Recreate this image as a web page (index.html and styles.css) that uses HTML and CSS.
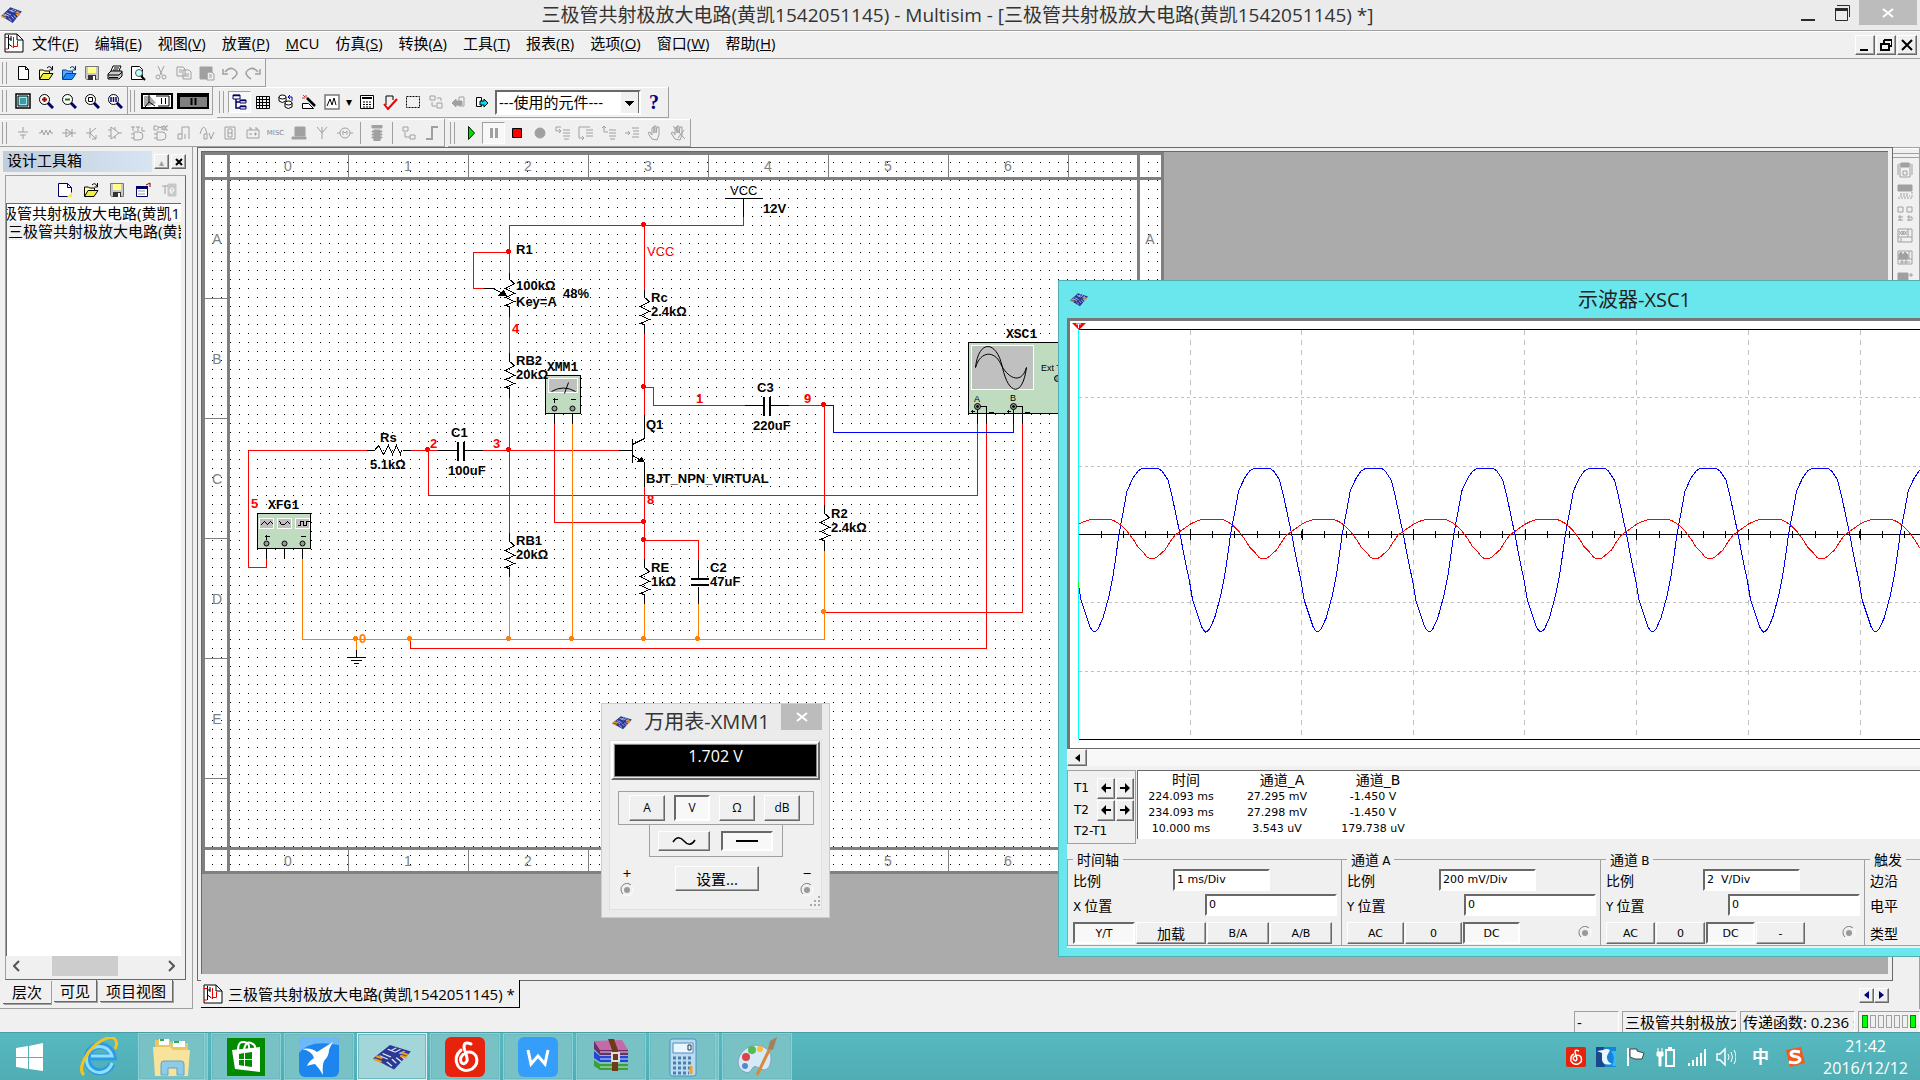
FILE: index.html
```html
<!DOCTYPE html>
<html lang="zh-CN">
<head>
<meta charset="utf-8">
<title>三极管共射极放大电路(黄凯1542051145) - Multisim</title>
<link rel="stylesheet" href="styles.css">
</head>
<body>
<svg class="defs" aria-hidden="true">
  <symbol id="chip" viewBox="0 0 40 40" preserveAspectRatio="none">
    <path d="M2 22 18 3 38 12 22 38Z" fill="#2a3a94"/>
    <path d="M8 18l8 5M11 15l8 5M16 9l7 4M24 7l-5 4M28 9l-5 4M32 12l-5 3M20 23l4 6M15 27l5 6M24 21l5 6M28 18l4 5" stroke="#dfe4f8" stroke-width="1.500"/>
    <path d="M3 23l7 4M5 19l6 3M29 14l6 3M28 18l6 3" stroke="#f39a1d" stroke-width="3"/>
  </symbol>
  <symbol id="doc" viewBox="0 0 20 20">
    <path d="M1 1h12l6 6v12H1Z" fill="#fff" stroke="#000"/><path d="M13 1v6h6" fill="none" stroke="#000"/>
    <path d="M1 4.500h3M1 16h3M9.500 4v11M9.500 13.500h4V8" fill="none" stroke="#e00"/><path d="M4.500 2v14M4.500 6h3M4.500 11l4 3M7 3v5" fill="none" stroke="#000"/>
  </symbol>
  <symbol id="newf" viewBox="0 0 16 16"><path d="M3.500 1.500h7l3 3v10h-10Z" fill="#fff" stroke="#000"/><path d="M10.500 1.500v3h3" fill="none" stroke="#000"/></symbol>
  <symbol id="open" viewBox="0 0 16 16"><path d="M1.500 14v-9h4l1 1h5v3" fill="#ff9" stroke="#000"/><path d="M1.500 14.500 5 8.500h10l-4 6Z" fill="#ee4" stroke="#000"/><path d="M9 3q3-3 5 1M14.500 1v4h-3" fill="none" stroke="#000"/></symbol>
  <symbol id="openb" viewBox="0 0 16 16"><path d="M1.500 14v-9h4l1 1h5v3" fill="#6af" stroke="#048"/><path d="M1.500 14.500 5 8.500h10l-4 6Z" fill="#28f" stroke="#048"/><path d="M9 3q3-3 5 1M14.500 1v4h-3" fill="none" stroke="#026"/></symbol>
  <symbol id="save" viewBox="0 0 16 16"><path d="M1.500 1.500h13v13h-12l-1-1Z" fill="#c8c8c8" stroke="#777"/><path d="M4 2h8v6H4Z" fill="#ff8"/><path d="M4 10h8v5H4Z" fill="#333"/><path d="M9 11h2v4H9Z" fill="#fff"/></symbol>
  <symbol id="zoom" viewBox="0 0 16 16"><circle cx="6.500" cy="6.500" r="5" fill="#fff" stroke="#000"/><path d="M10 10l5 5" stroke="#006" stroke-width="3"/></symbol>
  <symbol id="jack" viewBox="0 0 14 14"><circle cx="7" cy="7" r="6" fill="#f0f0f0" stroke="#fff"/><path d="M3 11A6 6 0 0 1 11 2" fill="none" stroke="#777"/><circle cx="7" cy="7" r="3" fill="#999"/></symbol>
</svg>

<header class="titlebar">
  <svg class="app-icon"><use href="#chip"/></svg>
  <h1>三极管共射极放大电路(黄凯1542051145) - Multisim - [三极管共射极放大电路(黄凯1542051145) *]</h1>
  <div class="winbtns">
    <button aria-label="最小化"><svg width="16" height="18"><path d="M1 16h14" stroke="#2b2b2b" stroke-width="2"/></svg></button>
    <button aria-label="还原"><svg width="16" height="18"><path d="M1.500 4.500h12v12h-12Z" fill="none" stroke="#2b2b2b"/><path d="M1 5.500h13" stroke="#2b2b2b" stroke-width="3"/><path d="M3 1.500h12.500V13" fill="none" stroke="#2b2b2b"/></svg></button>
    <button class="close" aria-label="关闭"><svg width="12" height="10"><path d="M1 1l10 8M11 1L1 9" stroke="#fff" stroke-width="2"/></svg></button>
  </div>
</header>

<nav class="menubar">
  <svg class="doc-icon"><use href="#doc"/></svg>
  <a href="#">文件(<u>F</u>)</a><a href="#">编辑(<u>E</u>)</a><a href="#">视图(<u>V</u>)</a><a href="#">放置(<u>P</u>)</a><a href="#"><u>M</u>CU</a><a href="#">仿真(<u>S</u>)</a><a href="#">转换(<u>A</u>)</a><a href="#">工具(<u>T</u>)</a><a href="#">报表(<u>R</u>)</a><a href="#">选项(<u>O</u>)</a><a href="#">窗口(<u>W</u>)</a><a href="#">帮助(<u>H</u>)</a>
  <div class="docbtns">
    <button class="raised" aria-label="最小化"><svg width="12" height="12"><path d="M1 11h8" stroke="#000" stroke-width="2"/></svg></button>
    <button class="raised" aria-label="还原"><svg width="12" height="12"><path d="M4 1h8v6H9M1 5h8v6H1ZM4 1v3" fill="none" stroke="#000" stroke-width="2"/></svg></button>
    <button class="raised" aria-label="关闭"><svg width="12" height="12"><path d="M1 1l10 10M11 1L1 11" stroke="#000" stroke-width="2"/></svg></button>
  </div>
</nav>

<div class="toolbars">
  <div class="tbrow">
    <div class="tb">
      <button aria-label="新建"><svg><use href="#newf"/></svg></button>
      <button aria-label="打开"><svg><use href="#open"/></svg></button>
      <button aria-label="打开示例"><svg><use href="#openb"/></svg></button>
      <button aria-label="保存"><svg><use href="#save"/></svg></button>
      <button aria-label="打印"><svg viewBox="0 0 16 16"><path d="M4 6 6 1h8l-2 5" fill="#fff" stroke="#000"/><path d="M1 9l3-3h11v5l-3 3H1Z" fill="#ccc" stroke="#000"/><path d="M1 10h11l3-3M2 12.500h9M7 3h5M6 5h5" fill="none" stroke="#000"/></svg></button>
      <button aria-label="打印预览"><svg viewBox="0 0 16 16"><path d="M1.500 1.500h8l3 3v10h-11Z" fill="#fff" stroke="#000"/><circle cx="9" cy="8" r="3.500" fill="#bff" stroke="#555"/><path d="M11 11l4 4" stroke="#000" stroke-width="2"/></svg></button>
      <button class="off" aria-label="剪切" disabled><svg viewBox="0 0 16 16"><path d="M5 1l4 9M11 1L7 10"/><circle cx="5" cy="12" r="2"/><circle cx="11" cy="12" r="2"/></svg></button>
      <button class="off" aria-label="复制" disabled><svg viewBox="0 0 16 16"><path d="M1 2h6l2 2v7H1ZM7 5h6l2 2v7H7ZM3 5h3M3 7h3M9 9h4M9 11h4"/></svg></button>
      <button class="off" aria-label="粘贴" disabled><svg viewBox="0 0 16 16"><path class="f" d="M1 2h12v5H8v7H1Z"/><path d="M8 7h5l2 2v6H8ZM10 10h3M10 12h3"/></svg></button>
      <button class="off" aria-label="撤销" disabled><svg viewBox="0 0 16 16"><path d="M3 7Q8 1 13 5t-3 9M1 4v5h5" stroke-width="1.500"/></svg></button>
      <button class="off" aria-label="重做" disabled><svg viewBox="0 0 16 16"><path d="M13 7Q8 1 3 5t3 9M15 4v5h-5" stroke-width="1.500"/></svg></button>
    </div>
  </div>
  <div class="tbrow tall">
    <div class="tb">
      <button aria-label="全屏"><svg viewBox="0 0 16 16"><path d="M1 1h14v14H1Z" fill="#fff" stroke="#000" stroke-width="1.500"/><path d="M3 3h10v10H3Z" fill="#8ee" stroke="#000"/><path d="M5 6h6M5 8h6M5 10h6" stroke="#045"/></svg></button>
      <button aria-label="放大"><svg viewBox="0 0 16 16"><use href="#zoom"/><path d="M4 6.500h5M6.500 4v5" stroke="#a00" stroke-width="2"/></svg></button>
      <button aria-label="缩小"><svg viewBox="0 0 16 16"><use href="#zoom"/><path d="M4 6.500h5" stroke="#080" stroke-width="2"/></svg></button>
      <button aria-label="区域缩放"><svg viewBox="0 0 16 16"><use href="#zoom"/><path d="M4.500 4.500h4v4h-4Z" fill="none" stroke="#000"/></svg></button>
      <button aria-label="适合页面"><svg viewBox="0 0 16 16"><use href="#zoom"/><path d="M4 4v5M6.500 4v5M9 4v5" stroke="#008" stroke-width="1.500"/></svg></button>
    </div>
    <div class="tb">
      <button class="switch" aria-label="仿真开关"><svg viewBox="0 0 32 16"><path d="M1 1h30v14H1Z" fill="#fff" stroke="#000" stroke-width="2"/><path d="M3 3h6l6 7-7 3H3Z" fill="#aaa"/><path d="M8 0v9l-4 5M8 9l6 4M15 3h13v10H17M20.500 5v6M24.500 5v6" fill="none" stroke="#000"/></svg></button>
      <button class="switch" aria-label="暂停开关"><svg viewBox="0 0 32 16"><path d="M1 1h30v14H1Z" fill="#808080" stroke="#000" stroke-width="2"/><path d="M2 14V3h28" fill="none" stroke="#000" stroke-width="2"/><path d="M14.500 5v7M18.500 5v7" stroke="#000" stroke-width="2"/></svg></button>
    </div>
    <div class="tb big">
      <button class="down" aria-label="设计工具箱"><svg viewBox="0 0 16 16"><path d="M1 1h7v4H1ZM8 6h6v3H8ZM8 12h6v3H8Z" fill="#fff" stroke="#006"/><path d="M1 1.500h7M8 6.500h6M8 12.500h6M4 5v9h4M4 8h4" fill="none" stroke="#006" stroke-width="1.500"/></svg></button>
      <button aria-label="电子表格"><svg viewBox="0 0 16 16"><path d="M1.500 2.500h13v12h-13ZM1.500 5.500h13M1.500 8.500h13M1.500 11.500h13M4.500 2.500v12M7.500 2.500v12M11.500 2.500v12" fill="none" stroke="#000"/></svg></button>
      <button aria-label="数据库管理"><svg viewBox="0 0 16 16"><path d="M1 3v4q3 3 7 0V3M7 9v4q3 3 7 0V9" fill="#fff" stroke="#000"/><ellipse cx="4.500" cy="3" rx="3.500" ry="2" fill="#fff" stroke="#000"/><ellipse cx="10.500" cy="9" rx="3.500" ry="2" fill="#fff" stroke="#000"/><path d="M14 7V3h-4M12 1l-2 2 2 2" fill="none" stroke="#00a"/></svg></button>
      <button aria-label="元件向导"><svg viewBox="0 0 16 16"><path d="M6 4l8 8" stroke="#000" stroke-width="2.500"/><path d="M1.500 14.500v-5h6l5 5Z" fill="#fff" stroke="#000"/><path d="M1 4h3M5 1v3M2 1l2 2" stroke="#c33"/></svg></button>
      <button aria-label="记录仪"><svg viewBox="0 0 16 16"><path d="M1 1h14v14H1Z" fill="#fff" stroke="#777" stroke-width="1.500"/><path d="M3 12l3-7 2 6 2-7 2 7" fill="none" stroke="#000"/></svg></button>
      <button class="drop" aria-label="更多">▾</button>
      <button aria-label="后处理"><svg viewBox="0 0 16 16"><path d="M1.500 1.500h13v13h-13Z" fill="#fff" stroke="#000"/><path d="M3 4h10" stroke="#000" stroke-width="2"/><path d="M4 8h8M4 10.500h8M4 13h8" stroke="#000" stroke-dasharray="2 1"/></svg></button>
      <button aria-label="规则检查"><svg viewBox="0 0 16 16"><path d="M4 11V2h7v4" fill="none" stroke="#000"/><path d="M2 10l4 5 9-10" fill="none" stroke="#e00" stroke-width="2"/></svg></button>
      <button aria-label="捕捉区域"><svg viewBox="0 0 16 16"><path d="M1.500 2.500h13v11h-13Z" fill="none" stroke="#000" stroke-dasharray="2 1"/></svg></button>
      <button class="off" aria-label="父层" disabled><svg viewBox="0 0 16 16"><path d="M2 2h5v4H2ZM9 9h5v5H9ZM4 8v4h4M9 4h4v3"/></svg></button>
      <button class="off" aria-label="后退" disabled><svg viewBox="0 0 16 16"><path d="M8 3h5v9H8Z"/><path class="f" d="M1 9l4-4v2h6v4H5v2Z"/></svg></button>
      <button aria-label="前进"><svg viewBox="0 0 16 16"><path d="M2.500 3.500h5v9h-5Z" fill="#fff" stroke="#000"/><path d="M6 7h4V5l4 4-4 4v-2H6Z" fill="#0de" stroke="#000"/></svg></button>
      <select aria-label="使用的元件"><option>---使用的元件---</option></select>
      <button class="help" aria-label="帮助">?</button>
    </div>
  </div>
  <div class="tbrow">
    <div class="tb wide">
      <button class="off" aria-label="电源" disabled><svg viewBox="0 0 16 16"><path d="M8 2v5M3 7h10M5 10h6M8 10v4"/></svg></button>
      <button class="off" aria-label="基础" disabled><svg viewBox="0 0 16 16"><path d="M1 8h2l1-3 2 5 2-5 2 5 2-5 1 3h2"/></svg></button>
      <button class="off" aria-label="二极管" disabled><svg viewBox="0 0 16 16"><path d="M1 8h14M5 4v8l6-4ZM11 4v8"/></svg></button>
      <button class="off" aria-label="晶体管" disabled><svg viewBox="0 0 16 16"><path d="M2 8h4M6 3v10M6 8l6-5M6 8l6 6M12 10v4H8"/></svg></button>
      <button class="off" aria-label="模拟" disabled><svg viewBox="0 0 16 16"><path d="M4 2v12l8-6ZM1 5h3M1 11h3M12 8h3M8 2v3M8 11v3"/></svg></button>
      <button class="off" aria-label="TTL" disabled><svg viewBox="0 0 16 16"><path d="M1 2h4M3 2v4M6 2h4M8 2v4M12 2v4h3M4 7h5q4 0 4 4t-4 4H4ZM1 9h3M1 13h3"/></svg></button>
      <button class="off" aria-label="CMOS" disabled><svg viewBox="0 0 16 16"><path d="M4 1H1v4h3M5 5V1l2 2 2-2v4M10 1h2v4h-2ZM15 1h-2v4h2M4 7h5q4 0 4 4t-4 4H4ZM1 9h3M1 13h3"/></svg></button>
      <button class="off" aria-label="混合数字" disabled><svg viewBox="0 0 16 16"><path d="M6 9V2h7v12M2 9h4v5H2ZM9 9v5"/></svg></button>
      <button class="off" aria-label="混合" disabled><svg viewBox="0 0 16 16"><path d="M1 9q4-14 7 0M5 9h3v5H5ZM10 8l2 6 3-7"/></svg></button>
      <button class="off" aria-label="指示器" disabled><svg viewBox="0 0 16 16"><path d="M3 2h10v12H3ZM6 4h4v8H6ZM6 8h4"/></svg></button>
      <button class="off" aria-label="功率" disabled><svg viewBox="0 0 16 16"><path d="M2 5h12v8H2ZM4 3h2v2M10 3h2v2M4 9h3M9 9h3M10.500 7.500v3"/></svg></button>
      <button class="off txt" aria-label="杂项" disabled>MISC</button>
      <button class="off" aria-label="外设" disabled><svg viewBox="0 0 16 16"><path class="f" d="M4 2h10v9H4ZM1 12h14v2H1Z"/></svg></button>
      <button class="off" aria-label="射频" disabled><svg viewBox="0 0 16 16"><path d="M8 14V8L3 2M8 8l5-6M8 2v6"/></svg></button>
      <button class="off" aria-label="机电" disabled><svg viewBox="0 0 16 16"><circle cx="8" cy="8" r="5"/><path d="M0 8h3M13 8h3M6 10V6l2 2 2-2v4"/></svg></button>
      <span class="sep"></span>
      <button class="off" aria-label="微控制器" disabled><svg viewBox="0 0 16 16"><path class="f" d="M3 0h10v3H3ZM5 5h6v11H5ZM3 6h10v1H3ZM3 9h10v1H3ZM3 12h10v1H3Z"/></svg></button>
      <span class="sep"></span>
      <button class="off" aria-label="层次块" disabled><svg viewBox="0 0 16 16"><path d="M2 2h5v4H2ZM9 10h5v4H9ZM4 7v5h5"/></svg></button>
      <button class="off" aria-label="总线" disabled><svg viewBox="0 0 16 16"><path d="M2 14h6V2h6" stroke-width="2"/></svg></button>
    </div>
    <div class="tb">
      <button aria-label="运行"><svg viewBox="0 0 16 16"><path d="M5.500 1.500v13l6-6.500Z" fill="#0d0" stroke="#020"/></svg></button>
      <button class="down" aria-label="暂停"><svg viewBox="0 0 16 16"><path class="f" d="M4 3h3v10H4ZM9 3h3v10H9Z" fill="#a0a0a0"/></svg></button>
      <button aria-label="停止"><svg viewBox="0 0 16 16"><path d="M3.500 3.500h9v9h-9Z" fill="#f00" stroke="#000"/></svg></button>
      <button class="off" aria-label="断点" disabled><svg viewBox="0 0 16 16"><circle class="f" cx="8" cy="8" r="5"/></svg></button>
      <button class="off" aria-label="步入" disabled><svg viewBox="0 0 16 16"><path d="M6 2H1v4h4M4 4l2 2-2 2M8 5h7M8 8h7M8 11h7M9 14h5"/></svg></button>
      <button class="off" aria-label="步过" disabled><svg viewBox="0 0 16 16"><path d="M12 2H1v11h4M4 11l2 2-2 2M8 5h7M8 8h7M8 11h7"/></svg></button>
      <button class="off" aria-label="步出" disabled><svg viewBox="0 0 16 16"><path d="M3 1v6h4M1 3l2-2 2 2M8 5h7M8 8h7M8 11h7M9 14h5"/></svg></button>
      <button class="off" aria-label="运行到光标" disabled><svg viewBox="0 0 16 16"><path d="M1 8h5M4 6l2 2-2 2M8 3h7M9 6h6M9 9h6M8 12h7"/></svg></button>
      <button class="off" aria-label="切换断点" disabled><svg viewBox="0 0 16 16"><path d="M5 14 1 8l2-1 2 3V3l2-1v6V1h2v7l1-6h2v8l-2 5Z"/></svg></button>
      <button class="off" aria-label="清除断点" disabled><svg viewBox="0 0 16 16"><path d="M5 14 1 8l2-1 2 3V3l2-1v6V1h2v7l1-6h2v8l-2 5ZM3 1l12 13M8 13l6-8"/></svg></button>
    </div>
  </div>
</div>

<main class="main">
  <aside class="toolbox">
    <div class="tbx-head"><h2>设计工具箱</h2><button class="raised grey" aria-label="收起">▴</button><button class="raised" aria-label="关闭"><svg width="8" height="8"><path d="M1 1l6 6M7 1L1 7" stroke="#000" stroke-width="2"/></svg></button></div>
    <div class="tbx-body">
      <div class="tbx-tools">
        <button aria-label="新建"><svg viewBox="0 0 16 16"><path d="M1.500 1.500h9l4 4v9h-13Z" fill="#fff" stroke="#006"/><path d="M10 15l5-5v5Z" fill="#ee4"/><path d="M10.500 1.500v4h4" fill="none" stroke="#006"/></svg></button>
        <button aria-label="打开"><svg><use href="#open"/></svg></button>
        <button aria-label="保存"><svg><use href="#save"/></svg></button>
        <button aria-label="关闭"><svg viewBox="0 0 16 16"><path d="M1.500 4.500h11v10h-11Z" fill="#fff" stroke="#006"/><path d="M1 5.500h12" stroke="#006" stroke-width="3"/><path d="M3 9h7M3 12h7" stroke="#999"/><path d="M11 3l4-2v4" fill="none" stroke="#800"/></svg></button>
        <button class="off" aria-label="重命名" disabled><svg viewBox="0 0 16 16"><path class="f pale" d="M7 2h8v12H7Z"/><path d="M1 4h6M4 4v8"/><path class="inv" d="M9 9h4q0-3-2-3t-2 3 3 2"/></svg></button>
      </div>
      <ul class="tree"><li class="root">三极管共射极放大电路(黄凯1542051145)</li><li class="leaf">三极管共射极放大电路(黄凯1542051145)</li></ul>
      <div class="hscroll"><button aria-label="向左"><svg width="7" height="12"><path d="M6 1L1 6l5 5" fill="none" stroke="#555" stroke-width="2"/></svg></button><i></i><button aria-label="向右"><svg width="7" height="12"><path d="M1 1l5 5-5 5" fill="none" stroke="#555" stroke-width="2"/></svg></button></div>
    </div>
    <div class="tbx-tabs"><button class="on">层次</button><button>可见</button><button>项目视图</button></div>
  </aside>

  <section class="mdi">
    <div class="frame"><div class="workspace">
      <svg class="sheet" viewBox="202 152 962 722" width="962" height="722">
        <defs><pattern id="dots" x="5" y="0" width="9" height="9" patternUnits="userSpaceOnUse"><rect width="1" height="1"/></pattern>
          <path id="rz" d="M0 0L5 4L-4 9L5 14L-4 18L5 22L-4 26L0 27"/>
          <g id="node"><path d="M-2-1h4v2h-4ZM-1-2h2v4h-2Z"/></g>
        </defs>
        <rect x="202" y="152" width="962" height="722" fill="#fff"/>
        <rect x="202" y="152" width="962" height="722" fill="url(#dots)" shape-rendering="crispEdges"/>
        <g fill="none" stroke="#808080" shape-rendering="crispEdges">
          <rect x="203.500" y="153.500" width="959" height="719" stroke-width="3"/>
          <path d="M228.500 155V871M1138.500 155V871M205 178.500H1161M205 848.500H1161" stroke-width="3"/>
          <path d="M348.500 155v23M468.500 155v23M588.500 155v23M708.500 155v23M828.500 155v23M948.500 155v23M1068.500 155v23M348.500 848v23M468.500 848v23M588.500 848v23M948.500 848v23M205 298.500h23M205 418.500h23M205 538.500h23M205 658.500h23M205 778.500h23"/>
        </g>
        <g class="ruler"><text x="288" y="171">0</text><text x="408" y="171">1</text><text x="528" y="171">2</text><text x="648" y="171">3</text><text x="768" y="171">4</text><text x="888" y="171">5</text><text x="1008" y="171">6</text><text x="288" y="866">0</text><text x="408" y="866">1</text><text x="528" y="866">2</text><text x="888" y="866">5</text><text x="1008" y="866">6</text><text x="217" y="244">A</text><text x="217" y="364">B</text><text x="217" y="484">C</text><text x="217" y="604">D</text><text x="217" y="724">E</text><text x="1150" y="244">A</text></g>
        <g transform="translate(.5 .5)" fill="none" shape-rendering="crispEdges">
          <path stroke="#f00" d="M509 272V225H743V216M509 252H473V288H483M509 316V352M509 397V532M644 225V289M644 333V414M644 387H653V405H744M788 405H824V504M509 450H618M482 450H509M410 450H437M428 450V495H977V423M366 450H248V567H266V558M554 423V522H644M644 486V558M644 540H698V559M824 612H1022V423M410 639V648H986V423"/>
          <path stroke="#ff8000" d="M302 557V639H824V550M356 639V649M509 576V639M572 423V639M644 603V639M698 603V639"/>
          <path stroke="#00f" d="M824 405H833V432H1013V423"/>
          <path stroke="#000" d="M725 198H762M743 198V216M509 272V279M509 306V316M509 352V361M509 387V397M509 532V541M509 567V576M644 289V297M644 323V333M644 558V567M644 594V603M824 504V513M824 540V550M366 450H374M402 450H410M437 450H456M464 450H482M744 405H762M770 405H788M618 450H632M644 414V438L632 444M632 438V462M632 455L644 462V486M698 559V577M698 586V603M483 288H493L506 295M356 649V657M347 657H365M350 660H361M353 663H358M554 414V423M572 414V423M266 543V558M284 543V558M302 543V558M977 414V423M986 414V423M1013 414V423M1022 414V423"/>
          <g stroke="#000"><use href="#rz" x="509" y="279"/><use href="#rz" x="509" y="361"/><use href="#rz" x="509" y="541"/><use href="#rz" x="644" y="297"/><use href="#rz" x="644" y="567"/><use href="#rz" x="824" y="513"/><use href="#rz" transform="translate(374 450) rotate(-90)"/></g>
          <path stroke="#000" stroke-width="2" d="M457 441V460M463 441V460M763 396V415M769 396V415M690 578H708M690 584H708"/>
          <path fill="#000" d="M507 296l-9-1 5-6ZM644 462l-7-1 4-5Z"/>
          <g fill="#f00" stroke="#f00"><use href="#node" x="643" y="224"/><use href="#node" x="508" y="251"/><use href="#node" x="643" y="386"/><use href="#node" x="823" y="404"/><use href="#node" x="508" y="449"/><use href="#node" x="427" y="449"/><use href="#node" x="643" y="521"/><use href="#node" x="643" y="539"/></g>
          <g fill="#ff8000" stroke="#ff8000"><use href="#node" x="355" y="638"/><use href="#node" x="409" y="638"/><use href="#node" x="508" y="638"/><use href="#node" x="571" y="638"/><use href="#node" x="643" y="638"/><use href="#node" x="697" y="638"/><use href="#node" x="823" y="611"/></g>
          <g stroke="#000" fill="#c0dcc0"><path d="M545 375H580V413H545ZM257 513H310V548H257ZM968 342H1080V413H968Z"/></g>
          <g stroke="#fff" fill="#c0c0c0"><path d="M548 378H577V392H548ZM259 518H273V528H259ZM277 518H291V528H277ZM295 518H309V528H295ZM971 345H1033V389H971Z"/></g>
          <g stroke="#000"><path d="M260 525l4-4 3 3 3-3 3 3M279 521l2 3 3 0 3-3 3 3M297 525h3v-4h3v4h3v-4h3M552 399h5M554 397v5M570 399h5M264 536h5M266 534v5M300 536h5M977 406V414M977 406h9v8M1013 406V414M1013 406h9v8M970 411h4M972 409v4M1006 411h4M1008 409v4M988 412h5M1024 412h5"/></g>
          <g stroke="#000" shape-rendering="auto"><path d="M551 391Q563 384 575 391M564 393L568 382M975 367C978 339 996 339 1002 367S1022 397 1026 367M975 367C980 350 994 350 1000 363S1020 386 1026 367"/><g fill="#999"><circle cx="554" cy="408" r="2.500"/><circle cx="572" cy="408" r="2.500"/><circle cx="266" cy="543" r="2.500"/><circle cx="284" cy="543" r="2.500"/><circle cx="302" cy="543" r="2.500"/><circle cx="977" cy="406" r="3"/><circle cx="1013" cy="406" r="3"/><circle cx="1057" cy="378" r="3"/></g><g fill="#000"><circle cx="977" cy="406" r="1"/><circle cx="1013" cy="406" r="1"/></g></g>
        </g>
        <g class="lbl"><text x="516" y="254">R1</text><text x="516" y="290">100kΩ</text><text x="516" y="306">Key=A</text><text x="563" y="298">48%</text><text x="516" y="365">RB2</text><text x="516" y="379">20kΩ</text><text x="516" y="545">RB1</text><text x="516" y="559">20kΩ</text><text x="651" y="302">Rc</text><text x="651" y="316">2.4kΩ</text><text x="763" y="213">12V</text><text x="646" y="429">Q1</text><text x="757" y="392">C3</text><text x="753" y="430">220uF</text><text x="646" y="483">BJT_NPN_VIRTUAL</text><text x="651" y="572">RE</text><text x="651" y="586">1kΩ</text><text x="710" y="572">C2</text><text x="710" y="586">47uF</text><text x="831" y="518">R2</text><text x="831" y="532">2.4kΩ</text><text x="380" y="442">Rs</text><text x="370" y="469">5.1kΩ</text><text x="451" y="437">C1</text><text x="448" y="475">100uF</text><text class="reg" x="730" y="195">VCC</text></g>
        <g class="lbl net"><text class="reg" x="647" y="256">VCC</text><text x="512" y="333">4</text><text x="696" y="403">1</text><text x="804" y="403">9</text><text x="430" y="448">2</text><text x="493" y="448">3</text><text x="251" y="508">5</text><text x="647" y="504">8</text><text class="gnd" x="359" y="643">0</text></g>
        <g class="inst"><text x="547" y="371">XMM1</text><text x="268" y="509">XFG1</text><text x="1006" y="338">XSC1</text></g>
        <g class="tiny"><text x="1041" y="371">Ext Trig</text><text x="974" y="402">A</text><text x="1010" y="401">B</text></g>
      </svg>

      <section class="meter">
        <header><svg><use href="#chip"/></svg><h2>万用表-XMM1</h2><button aria-label="关闭"><svg width="12" height="10"><path d="M1 1l10 8M11 1L1 9" stroke="#fff" stroke-width="2"/></svg></button></header>
        <div class="m-client">
          <output class="display">1.702 V</output>
          <div class="modes"><button class="raised">A</button><button class="sunk">V</button><button class="raised">Ω</button><button class="raised">dB</button></div>
          <div class="modes acdc"><button class="raised" aria-label="交流"><svg width="24" height="10"><path d="M1 6Q6-2 12 5T23 4" fill="none" stroke="#000" stroke-width="1.500"/></svg></button><button class="sunk" aria-label="直流"><svg width="24" height="10"><path d="M1 5h22" stroke="#000" stroke-width="2"/></svg></button></div>
          <div class="terms"><span>+<svg><use href="#jack"/></svg></span><button class="raised">设置...</button><span>−<svg><use href="#jack"/></svg></span></div>
          <svg class="grip" width="12" height="12"><path d="M10 1h2M6 5h2M10 5h2M2 9h2M6 9h2M10 9h2" stroke="#aaa" stroke-width="2"/></svg>
        </div>
      </section>
    </div></div>
    <div class="doctabs"><button><svg><use href="#doc"/></svg>三极管共射极放大电路(黄凯1542051145) *</button><span class="arrows"><button class="raised" aria-label="上一个"><svg width="5" height="8"><path d="M5 0v8L0 4Z" fill="#000080"/></svg></button><button class="raised" aria-label="下一个"><svg width="5" height="8"><path d="M0 0v8l5-4Z" fill="#000080"/></svg></button></span></div>
  </section>

  <aside class="instruments">
    <button aria-label="万用表"><svg viewBox="0 0 16 16"><path d="M1 2v11M15 2v11M3 1v14h10V1M6 9h4v4H6Z"/><path class="f" d="M4 1h8v4H4Z"/></svg></button>
    <button aria-label="函数发生器"><svg viewBox="0 0 16 16"><path class="f" d="M1 1h14v6H1Z"/><path d="M1 14h14V7M3 10h9M3 12h10" stroke-dasharray="2 1"/></svg></button>
    <button aria-label="瓦特计"><svg viewBox="0 0 16 16"><path d="M1 1h5v5H1ZM10 1h5v5h-5ZM1 14h5M1 11h5M10 11h5v3h-5M3 9v6M12 9v6"/></svg></button>
    <button aria-label="示波器"><svg viewBox="0 0 16 16"><path d="M1 1h14v13H1ZM1 9h14M11 1v8M2 7l3-4 2 4 3-4M2 3l3 4 2-4 3 4M4 10v4"/></svg></button>
    <button aria-label="四通道示波器"><svg viewBox="0 0 16 16"><path d="M1 1h14v13H1ZM1 9h14M12 1v8M3 12h10M5 10v4M9 10v4"/><path class="f" d="M2 4l2-2 2 3 2-3 3 3v4H2Z"/></svg></button>
    <button aria-label="波特图仪"><svg viewBox="0 0 16 16"><path class="f" d="M1 1h10v12H1Z"/><path d="M13 2h2v2h-2Z"/></svg></button>
  </aside>
</main>

<footer class="status"><span class="s1">-</span><span class="s2">三极管共射极放大电路</span><span class="s3">传递函数: 0.236 s</span><span class="s4"><i class="g"></i><i></i><i></i><i></i><i></i><i></i><i class="g"></i></span></footer>

<nav class="taskbar">
  <button class="plain" aria-label="开始"><svg viewBox="0 0 28 28"><path d="M0 5l12-2v11H0ZM13 3l14-3v14H13ZM0 15h12v11L0 24ZM13 15h14v13l-14-2Z" fill="#fff"/></svg></button>
  <button class="plain ie" aria-label="Internet Explorer"><svg viewBox="0 0 40 40"><path d="M33 27A13 13 0 1 1 34 20H12" fill="none" stroke="#2b9be6" stroke-width="7"/><path d="M33 26A13 13 0 1 1 33 19H12" fill="none" stroke="#8fe0fb" stroke-width="3"/><path d="M5 38C-2 32 8 12 22 4S40 4 36 12" fill="none" stroke="#f4c320" stroke-width="3"/></svg></button>
  <button class="stack" aria-label="文件资源管理器"><svg viewBox="0 0 40 40"><path d="M3 3h14l3 3h16v32H3Z" fill="#e9c764"/><path d="M7 2h10v6H7ZM21 4h12v6H21Z" fill="#fff"/><path d="M8 3h4M22 5h5" stroke="#3a5" stroke-width="2"/><path d="M1 10h17l3 3h17l-2 26H3Z" fill="#f8e39a"/><path d="M9 38V27q0-3 3-3h17q3 0 3 3v11h-7V31H16v7Z" fill="#8ecbe8" stroke="#5aa3cc"/></svg></button>
  <button aria-label="应用商店"><svg viewBox="0 0 40 40"><path fill="#038a03" d="M1 1h38v38H1Z"/><path d="M6 13l28-3v25L9 32Z" fill="#fff"/><path d="M12 13q0-9 6-8t5 7M18 12q2-8 7-6t4 5" fill="none" stroke="#fff" stroke-width="2"/><path d="M13 17l5-1v6h-5ZM19 16l7-1v7h-7ZM13 23h5v6l-5-1ZM19 23h7v7l-7-1Z" fill="#038a03"/></svg></button>
  <button aria-label="迅雷"><svg viewBox="0 0 40 40"><rect width="40" height="40" rx="6" fill="#1c86ee"/><path d="M0 16Q10 2 40 8V6q0-6-6-6H6Q0 0 0 6Z" fill="#6db9f7"/><path d="M3 12q9-2 15 3L34 5q-3 5-4 8 0 6-5 11-2 5-1 14-4-7-8-11-6 1-8 2 2-5 7-8-2-7-12-9Z" fill="#fff"/></svg></button>
  <button class="active" aria-label="Multisim"><svg class="chip"><use href="#chip"/></svg></button>
  <button aria-label="网易云音乐"><svg viewBox="0 0 40 40"><rect width="40" height="40" rx="6" fill="#e8230b"/><path d="M26 7q-7-3-7 3c0 4 4 9 3 14q-3 5-6 1-2-5 4-9 7-3 11 3 3 8-4 13-9 4-14-3-5-9 3-16" fill="none" stroke="#fff" stroke-width="3" stroke-linecap="round"/></svg></button>
  <button aria-label="WPS"><svg viewBox="0 0 40 40"><rect width="40" height="40" rx="6" fill="#359efa"/><path d="M10 13l3 14 7-8 7 8 3-14" fill="none" stroke="#fff" stroke-width="3"/></svg></button>
  <button aria-label="WinRAR"><svg viewBox="0 0 40 40"><path d="M3 4l28-1 6 10H9Z" fill="#c669a9"/><path d="M3 4l6 9v5l-6-6ZM9 13h28v5H9Z" fill="#6b2f68"/><path d="M3 14l6 5h28v6H9l-6-4Z" fill="#2545d8"/><path d="M3 23l6 4h28v6H9l-6-4Z" fill="#39a139"/><path d="M9 15h28M9 22h28M9 30h28" stroke="#ddd"/><path d="M17 2h6l4 11v21h-6V13Z" fill="#6d3b18"/><path d="M21 16h7v8h-7Z" fill="none" stroke="#ddd" stroke-width="2"/></svg></button>
  <button class="stack" aria-label="计算器"><svg viewBox="0 0 40 40"><rect x="7" y="2" width="26" height="37" rx="2" fill="#b9dcf2" stroke="#4e8dbb"/><path d="M10 6h20v10H10Z" fill="#e9f6fd" stroke="#4e8dbb"/><path d="M25 8h3v5h-3Z" fill="none" stroke="#234"/><path d="M10 21h20M10 26h20M10 31h20M10 36h16" stroke="#4b7fa9" stroke-width="3" stroke-dasharray="3 2"/><path d="M28 29v8" stroke="#f7a021" stroke-width="3"/></svg></button>
  <button aria-label="画图"><svg viewBox="0 0 40 40"><path d="M19 8C2 10-4 28 6 34q6 4 9-2 2-5 8 0 9 4 11-8 2-14-15-16Z" fill="#d5e9f7" stroke="#7ba5c2"/><circle cx="9" cy="20" r="4" fill="#d44"/><circle cx="15" cy="13" r="4" fill="#5b5"/><circle cx="23" cy="12" r="3" fill="#fb3"/><circle cx="8" cy="29" r="3" fill="#58c"/><path d="M37 3L20 38" stroke="#d78a3b" stroke-width="3"/><path d="M40 0l-7 4-2 8 5 1Z" fill="#a5805e"/></svg></button>
  <div class="tray">
    <svg viewBox="0 0 20 20"><rect width="20" height="20" rx="2" fill="#e8230b"/><path d="M13 4q-4-2-4 1l2 7q-1 3-3 1t1-4q4-2 6 1 2 5-3 7-5 1-7-3-1-5 3-7" fill="none" stroke="#fff" stroke-width="1.500"/></svg>
    <svg viewBox="0 0 20 20"><rect width="20" height="20" fill="#1484d6"/><path d="M0 0h8q-3 8 1 20H0Z" fill="#164a8c"/><path d="M1 4l6-1q4-2 7 0l-3 6q-1 5 5 8-9 2-10-4V6Z" fill="#e8f6ff"/><path d="M15 4q5 6 1 15h4V4Z" fill="#38b6ff"/></svg>
    <svg viewBox="0 0 20 20"><path d="M2 1v18" stroke="#fff" stroke-width="2"/><path d="M4 2h7v2l7 2-2 6H9l-5-2Z" fill="#fff" stroke="#444"/></svg>
    <svg viewBox="0 0 20 20"><path d="M2 1v4M6 1v4M1 5h6v4H5v10H3V9H1Z" fill="#fff" stroke="#fff"/><path d="M10 3h8v16h-8ZM12 1h4" fill="none" stroke="#fff" stroke-width="2"/></svg>
    <svg viewBox="0 0 20 20"><path d="M3 19v-3M7 19v-6M11 19V10M15 19V6M19 19V2" stroke="#fff" stroke-width="2"/></svg>
    <svg viewBox="0 0 20 20"><path d="M1 7h3l5-5v16l-5-5H1Z" fill="none" stroke="#fff" stroke-width="1.500"/><path d="M12 7q2 3 0 6M15 5q3 5 0 10M18 3q4 7 0 14" fill="none" stroke="#fff"/></svg>
    <b>中</b>
    <svg viewBox="0 0 20 20"><path d="M1 3l15-3 4 16-15 4Z" fill="#ef5a1e"/><path d="M15 5Q6 3 6 7c0 4 9 1 9 6q-2 4-11 2" fill="none" stroke="#fff" stroke-width="3"/></svg>
    <time>21:42<br>2016/12/12</time>
  </div>
</nav>

<section class="scope">
  <header><svg><use href="#chip"/></svg><h2>示波器-XSC1</h2></header>
  <div class="s-client">
    <div class="plot">
      <svg width="852" height="427" viewBox="1070 321 852 427">
        <defs>
          <path id="wb" d="M0 48L3 66L9 84L12 93L14 96L16 98L18 97L20 95L25 84L31 62L35 42L38 22L41 0L45-21L49-43L55-56L60-63L65-66L80-66L84-63L90-54L94-38L98-19L102 0L107 26L111.600 48"/>
          <path id="wr" d="M0-10Q9-15 17-15H30Q39-13 48-3L54 5L59 13L64 18L68 23Q73 27 78 23L86 16L91 8L96 1L103-4L111.600-10"/>
        </defs>
        <g fill="none" shape-rendering="crispEdges">
          <path stroke="#c0c0c0" stroke-dasharray="5 5" d="M1190.500 330V739M1301.500 330V739M1413.500 330V739M1524.500 330V739M1636.500 330V739M1748.500 330V739M1860.500 330V739"/>
          <path stroke="#c0c0c0" stroke-dasharray="3 3" d="M1079 397.500H1922M1079 466.500H1922M1079 602.500H1922M1079 671.500H1922"/>
          <path stroke="#000" d="M1079 329.500H1922M1079 534.500H1922M1079 739.500H1922"/>
          <path stroke="#000" stroke-width="7" stroke-dasharray="1 21.320" d="M1100.500 534.500H1922"/>
          <path stroke="#000" stroke-width="11" stroke-dasharray="1 110.600" d="M1190 534.500H1922"/>
          <g stroke="#00f"><use href="#wb" x="1078" y="534"/><use href="#wb" x="1189.600" y="534"/><use href="#wb" x="1301.200" y="534"/><use href="#wb" x="1412.800" y="534"/><use href="#wb" x="1524.400" y="534"/><use href="#wb" x="1636" y="534"/><use href="#wb" x="1747.600" y="534"/><use href="#wb" x="1859.200" y="534"/></g>
          <g stroke="#f00"><use href="#wr" x="1079" y="534"/><use href="#wr" x="1190.600" y="534"/><use href="#wr" x="1302.200" y="534"/><use href="#wr" x="1413.800" y="534"/><use href="#wr" x="1525.400" y="534"/><use href="#wr" x="1637" y="534"/><use href="#wr" x="1748.600" y="534"/><use href="#wr" x="1860.200" y="534"/></g>
          <path stroke="#0ff" d="M1078.500 330V739"/><path stroke="#0f0" d="M1078.500 582v5"/>
        </g>
        <path d="M1072 323h14l-7 7Z" fill="#f00"/><path d="M1078.500 324v4M1076 324h5" stroke="#fff"/>
      </svg>
    </div>
    <div class="track"><button class="raised" aria-label="向左"><svg width="5" height="8"><path d="M5 0v8L0 4Z"/></svg></button></div>
    <div class="readout">
      <div class="cursors"><span>T1</span><button class="raised" aria-label="T1 左移"><svg width="10" height="10"><path d="M0 5l5-5v4h5v2H5v4Z"/></svg></button><button class="raised" aria-label="T1 右移"><svg width="10" height="10"><path d="M10 5L5 0v4H0v2h5v4Z"/></svg></button><span>T2</span><button class="raised" aria-label="T2 左移"><svg width="10" height="10"><path d="M0 5l5-5v4h5v2H5v4Z"/></svg></button><button class="raised" aria-label="T2 右移"><svg width="10" height="10"><path d="M10 5L5 0v4H0v2h5v4Z"/></svg></button><span class="diff">T2-T1</span></div>
      <div class="vals"><table>
        <tr><th>时间</th><th>通道_A</th><th>通道_B</th></tr>
        <tr><td>224.093 ms</td><td>27.295 mV</td><td>-1.450 V</td></tr>
        <tr><td>234.093 ms</td><td>27.298 mV</td><td>-1.450 V</td></tr>
        <tr><td>10.000 ms</td><td>3.543 uV</td><td>179.738 uV</td></tr>
      </table></div>
    </div>
    <div class="groups">
      <fieldset class="ga"><legend>时间轴</legend>
        <div class="r1"><label for="ts">比例</label><input id="ts" value="1 ms/Div"></div>
        <div class="r2"><label for="xp"><small>X</small> 位置</label><input id="xp" value="0"></div>
        <div class="r3"><button class="sunk">Y/T</button><button class="raised cjk">加载</button><button class="raised">B/A</button><button class="raised">A/B</button></div>
      </fieldset>
      <fieldset class="gb"><legend>通道 <small>A</small></legend>
        <div class="r1"><label for="as">比例</label><input id="as" value="200 mV/Div"></div>
        <div class="r2"><label for="ap"><small>Y</small> 位置</label><input id="ap" value="0"></div>
        <div class="r3"><button class="raised">AC</button><button class="raised">0</button><button class="sunk">DC</button><svg><use href="#jack"/></svg></div>
      </fieldset>
      <fieldset class="gc"><legend>通道 <small>B</small></legend>
        <div class="r1"><label for="bs">比例</label><input id="bs" value="2  V/Div"></div>
        <div class="r2"><label for="bp"><small>Y</small> 位置</label><input id="bp" value="0"></div>
        <div class="r3"><button class="raised">AC</button><button class="raised">0</button><button class="sunk">DC</button><button class="raised">-</button><svg><use href="#jack"/></svg></div>
      </fieldset>
      <fieldset class="gd"><legend>触发</legend>
        <div class="r1"><span>边沿</span></div><div class="r2"><span>电平</span></div><div class="r3"><span>类型</span></div>
      </fieldset>
    </div>
  </div>
</section>
</body>
</html>
```
FILE: styles.css
```css
*, *::before { box-sizing: border-box; }
html, body { height: 100%; }
body {
  margin: 0; display: flex; flex-direction: column; overflow: hidden; position: relative;
  background: #f0f0f0; color: #000;
  font: 15px/20px "Open Sans", "Noto Sans CJK SC", sans-serif;
}
h1, h2 { margin: 0; font-weight: 400; }
button { border: 0; padding: 0; margin: 0; background: none; color: #000; font: inherit; display: flex; align-items: center; justify-content: center; flex: none; }
svg { flex: none; display: block; }
.defs { position: absolute; width: 0; height: 0; }
.raised { background: #f0f0f0; border: 1px solid; border-color: #fff #696969 #696969 #fff; box-shadow: inset -1px -1px #a0a0a0; }
.sunk { background: #f8f8f8; border: 2px solid; border-color: #696969 #fff #fff #696969; }

.titlebar { display: flex; align-items: center; height: 31px; background: #ebebeb; border-bottom: 1px solid #a0a0a0; flex: none; }
.app-icon { width: 23px; height: 18px; }
.titlebar h1 { flex: 1; text-align: center; padding-left: 92px; font-size: 19px; line-height: 28px; color: #333; white-space: nowrap; }
.winbtns { display: flex; align-self: flex-start; padding-right: 3px; gap: 18px; }
.winbtns button { height: 25px; width: 16px; }
.winbtns .close { width: 58px; background: #bcbcbc; margin-left: -9px; }

.menubar { display: flex; align-items: center; height: 28px; gap: 16px; border-top: 1px solid #fff; border-bottom: 1px solid #a0a0a0; padding: 0 0 4px 4px; flex: none; }
.menubar a { color: #000; text-decoration: none; white-space: nowrap; }
.doc-icon { width: 20px; height: 20px; margin-right: -8px; }
.docbtns { display: flex; gap: 1px; margin: 4px 0 0 auto; padding-right: 3px; }
.docbtns button { width: 20px; height: 20px; }

.toolbars { flex: none; }
.tbrow { display: flex; height: 28px; align-items: flex-start; }
.tbrow.tall { height: 32px; }
.tb { display: flex; align-items: center; height: 28px; padding: 0 1px 0 2px; border-right: 1px solid #a0a0a0; border-bottom: 1px solid #a0a0a0; box-shadow: inset 0 1px #fff; }
.tb.big { height: 31px; margin-left: 4px; }
.tb.wide { margin-right: 3px; }
.tb::before { content: ""; width: 5px; height: 22px; margin-right: 4px; border: solid #a0a0a0; border-width: 0 1px; flex: none; }
.tb button { width: 23px; height: 22px; }
.tb button svg { width: 16px; height: 16px; }
.tb .switch { width: 36px; }
.tb .switch svg { width: 32px; height: 16px; }
.tb .down { background: #f8f8f8; border: 1px solid; border-color: #a0a0a0 #fff #fff #a0a0a0; }
.tb .drop { width: 12px; font-size: 12px; }
.tb .txt { font: 7px/12px "DejaVu Sans", sans-serif; color: #888; }
.tb .help { font: bold 20px/20px "Liberation Serif", serif; color: #000080; width: 26px; }
.tb .sep { width: 1px; height: 22px; background: #a0a0a0; margin: 0 4px; }
.tb select { width: 146px; height: 25px; margin-left: 2px; padding: 0 0 0 2px; border: 2px solid; border-color: #696969 #fff #fff #696969; border-radius: 0; appearance: none; font: inherit; color: #000;
  background: linear-gradient(#000, #000) no-repeat right 5px top 9px / 9px 1px, linear-gradient(#000, #000) no-repeat right 6px top 10px / 7px 1px, linear-gradient(#000, #000) no-repeat right 7px top 11px / 5px 1px, linear-gradient(#000, #000) no-repeat right 8px top 12px / 3px 1px, linear-gradient(#000, #000) no-repeat right 9px top 13px / 1px 1px, linear-gradient(90deg, #fff 0 1px, #f0f0f0 1px 18px, #696969 18px) no-repeat right / 19px 100%, #fff; }
.off svg, .instruments svg { fill: none; stroke: #a0a0a0; }
.off .f, .instruments .f { fill: #a0a0a0; }
.off .pale { fill: #c8c8c8; stroke: #c8c8c8; }
.off .inv { stroke: #fff; }

.main { flex: 1; min-height: 0; display: flex; }
.toolbox { width: 193px; padding: 4px 6px 0 3px; display: flex; flex-direction: column; border-right: 1px solid #a0a0a0; border-bottom: 1px solid #a0a0a0; flex: none; }
.tbx-head { display: flex; gap: 2px; align-items: center; }
.tbx-head h2 { flex: 1; height: 21px; padding-left: 4px; background: linear-gradient(90deg, #bfcddb, #d7e4f2); font-size: 15px; line-height: 19px; }
.tbx-head .raised { width: 15px; height: 15px; color: #a0a0a0; font-size: 10px; }
.tbx-body { flex: 1; min-height: 0; display: flex; flex-direction: column; margin: 3px 0 0 2px; border: 1px solid; border-color: #a0a0a0 #696969 #696969 #a0a0a0; padding: 0 4px 3px 0; }
.tbx-tools { display: flex; justify-content: flex-end; gap: 10px; height: 27px; padding-right: 4px; }
.tbx-tools button { width: 16px; }
.tbx-tools svg { width: 16px; height: 16px; }
.tree { flex: 1; margin: 0; padding: 0; list-style: none; background: #fff; border-left: 1px solid #696969; border-top: 1px solid #696969; overflow: hidden; line-height: 18px; white-space: nowrap; }
.tree li { overflow: hidden; height: 18px; }
.tree .root { text-indent: -20px; }
.tree .leaf { background: #f0f0f0; padding-left: 1px; }
.hscroll { display: flex; align-items: stretch; height: 20px; }
.hscroll button { width: 20px; }
.hscroll i { width: 66px; background: #cdcdcd; margin: 0 auto 0 26px; }
.tbx-tabs { display: flex; align-items: flex-start; height: 28px; gap: 3px; }
.tbx-tabs button { height: 22px; padding: 0 6px; border: solid #696969; border-width: 0 1px 1px 0; box-shadow: 1px 1px #a0a0a0; }
.tbx-tabs .on { height: 24px; padding: 0 9px; border-right: 0; }

.mdi { flex: 1; min-width: 0; display: flex; flex-direction: column; margin-left: 4px; }
.frame { flex: 1; min-height: 0; border: 1px solid #696969; padding: 3px 4px 6px 3px; display: flex; }
.workspace { flex: 1; min-width: 0; position: relative; overflow: hidden; background: #ababab; border-left: 1px solid #696969; border-top: 1px solid #696969; }
.doctabs { display: flex; justify-content: space-between; height: 28px; padding: 0 4px 0 4px; flex: none; }
.doctabs > button { height: 28px; gap: 5px; padding: 0 4px 0 2px; margin-top: -1px; background: #f0f0f0; border: solid #000; border-width: 0 1px 1px 0; white-space: nowrap; }
.doctabs > button svg { width: 20px; height: 20px; }
.arrows { display: flex; align-self: center; }
.arrows button { width: 15px; height: 15px; }
.instruments { width: 27px; padding-top: 12px; border-right: 1px solid #a0a0a0; background: linear-gradient(#a0a0a0 0 1px, #fff 1px 2px, #f0f0f0 2px 6px, #a0a0a0 6px 7px, #f0f0f0 7px 10px, #a0a0a0 10px 11px, #f0f0f0 11px); flex: none; overflow: hidden; }
.instruments button { width: 24px; height: 22px; }
.instruments svg { width: 16px; height: 16px; }

.ruler text { font: 14px "Liberation Sans", sans-serif; fill: #808080; text-anchor: middle; }
.lbl text { font: bold 13px "Liberation Sans", sans-serif; }
.lbl .reg { font-weight: 400; }
.net text { fill: #f00; }
.net .gnd { fill: #ff8000; }
.inst text { font: bold 13px "Liberation Mono", monospace; }
.tiny text { font: 9px "Liberation Sans", sans-serif; }

.meter { position: absolute; left: 399px; top: 551px; width: 229px; background: #ebebeb; border: 1px solid #ccc; padding: 0 7px 7px; }
.meter header { display: flex; height: 36px; align-items: center; }
.meter header svg { width: 22px; height: 15px; margin-left: 2px; }
.meter header h2 { flex: 1; text-align: center; font-size: 20px; line-height: 24px; color: #333; }
.meter header button { align-self: flex-start; width: 41px; height: 26px; background: #bcbcbc; }
.meter header button svg { width: 12px; height: 10px; margin: 0; }
.m-client { position: relative; background: #f0f0f0; border: 1px solid #e0e0e0; padding: 0 1px 12px; display: flex; flex-direction: column; align-items: center; }
.display { width: 100%; height: 39px; border: 2px solid; border-color: #fff #696969 #696969 #fff; outline: 1px solid #888; outline-offset: -4px; background: #000; box-shadow: inset 0 0 0 2px #e8e8e8; color: #fff; text-align: center; font-size: 16px; line-height: 26px; }
.modes { display: flex; justify-content: center; gap: 9px; width: 196px; padding: 3px 6px 3px 4px; margin-top: 11px; border: 1px solid #a0a0a0; font-size: 12px; }
.modes button { width: 36px; height: 26px; }
.acdc { width: 134px; margin-top: -1px; gap: 11px; padding: 6px 5px 5px; }
.acdc button { width: 52px; height: 20px; }
.terms { display: flex; justify-content: space-between; width: 100%; padding: 9px 6px 0 9px; }
.terms span { display: flex; flex-direction: column; align-items: center; line-height: 14px; gap: 3px; }
.terms span svg { width: 14px; height: 14px; }
.terms button { width: 84px; height: 25px; }
.grip { position: absolute; right: 1px; bottom: 1px; }

.status { display: flex; justify-content: flex-end; gap: 3px; height: 23px; padding: 2px 0 0; line-height: 20px; flex: none; }
.status span { border: solid #a0a0a0; border-width: 1px 0 0 1px; padding-left: 2px; overflow: hidden; white-space: nowrap; border-right: 1px solid #fff; }
.s1 { width: 45px; } .s2, .s3 { width: 115px; }
.status .s4 { width: 62px; display: flex; gap: 2px; padding: 3px; }
.s4 i { width: 6px; height: 13px; border: 1px solid #a0a0a0; }
.s4 .g { background: #0f0; border-color: #080; }

.taskbar { display: flex; align-items: stretch; height: 48px; background: linear-gradient(#57b9c0, #50adb4); border-top: 1px solid #4a9da3; gap: 3px; flex: none; }
.taskbar > button { width: 70px; border: 1px solid #8bd0d4; background: #78c2c6; box-shadow: inset 0 0 0 1px #6dbac0; }
.taskbar > button svg { width: 40px; height: 40px; }
.taskbar > button .chip { width: 42px; height: 28px; }
.taskbar > .plain { background: none; border: 0; box-shadow: none; width: 60px; }
.taskbar > .plain svg { width: 28px; height: 28px; }
.taskbar > .ie { width: 72px; }
.taskbar > .ie svg { width: 40px; height: 40px; }
.taskbar > .stack { border-right: 4px double #8bd0d4; }
.taskbar > .active { background: #a3d6d9; border-color: #e0f2f3; }
.tray { display: flex; align-items: center; gap: 10px; margin-left: auto; padding-right: 12px; color: #fff; }
.tray svg { width: 20px; height: 20px; }
.tray b { font-size: 17px; margin: 0 6px; }
.tray time { text-align: center; font-size: 16px; line-height: 22px; margin-left: 8px; }

.scope { position: absolute; left: 1058px; right: 0; top: 280px; background: #6ae7ed; border: solid #52aeb2; border-width: 1px 0 1px 1px; padding: 0 0 8px 8px; overflow: hidden; }
.scope > header { display: flex; align-items: center; height: 37px; padding-left: 2px; }
.scope > header svg { width: 20px; height: 15px; }
.scope > header h2 { font-size: 20px; line-height: 24px; color: #222; flex: 1; text-align: center; padding-left: 260px; }
.s-client { background: #f0f0f0; padding-bottom: 2px; }
.plot { height: 431px; border: solid #777; border-width: 3px 0 0 3px; border-bottom: 1px solid #696969; background: #fff; overflow: hidden; }
.track { height: 21px; background: #f8f8f8; border-bottom: 4px solid #f0f0f0; }
.track button { width: 20px; height: 17px; }
.readout { display: flex; align-items: flex-start; gap: 1px; font: 11px/16px "DejaVu Sans", "Noto Sans CJK SC", sans-serif; }
.cursors { width: 69px; height: 74px; border: 1px solid #a0a0a0; display: grid; grid-template-columns: 22px 18px 18px; grid-template-rows: 22px 22px 18px; column-gap: 1px; padding: 6px 0 0 6px; font-size: 12px; align-items: center; }
.cursors button { width: 18px; height: 21px; }
.cursors .diff { grid-column: 1 / 4; padding-top: 2px; }
.vals { flex: 1; height: 69px; background: #fff; border: solid #696969; border-width: 1px 0 0 1px; }
.vals table { border-collapse: collapse; table-layout: fixed; width: 288px; text-align: center; }
.vals td, .vals th { padding: 0; height: 16px; font-weight: 400; white-space: nowrap; }
.vals td { padding-right: 10px; }
.vals th { font-size: 14px; height: 18px; }
.groups { display: grid; grid-template-columns: 274px 259px 264px 1fr; margin-top: 5px; font: 14px/22px "Noto Sans CJK SC", sans-serif; }
.groups fieldset { min-width: 0; margin: 0; border: solid #a0a0a0; border-width: 1px 0 1px 1px; padding: 0 4px 3px 5px; height: 97px; }
.groups legend { padding: 0 4px; line-height: 20px; }
.groups small { font: 12px "DejaVu Sans", sans-serif; }
.groups fieldset > div { display: flex; justify-content: space-between; align-items: center; height: 25px; white-space: nowrap; }
.groups input { width: 97px; height: 22px; border: 2px solid; border-color: #696969 #fff #fff #696969; padding: 0 2px; background: #fff; font: 11px "DejaVu Sans", sans-serif; color: #000; white-space: pre; }
.groups .r2 input { width: 132px; }
.ga { --gap: 67px; } .gb, .gc { --gap: 60px; }
.groups fieldset > .r1 { padding-right: var(--gap); margin-top: -2px; }
.groups fieldset > .r3 { justify-content: flex-start; gap: 1px; padding-top: 5px; height: 27px; }
.r3 button { font: 11px "DejaVu Sans", sans-serif; height: 22px; width: 57px; }
.ga .r3 button { width: 62px; }
.ga .r3 .cjk { font: 14px "Noto Sans CJK SC", sans-serif; width: 70px; }
.gc .r3 button { width: 49px; }
.r3 svg { width: 14px; height: 14px; margin: 0 4px 0 auto; }
```
